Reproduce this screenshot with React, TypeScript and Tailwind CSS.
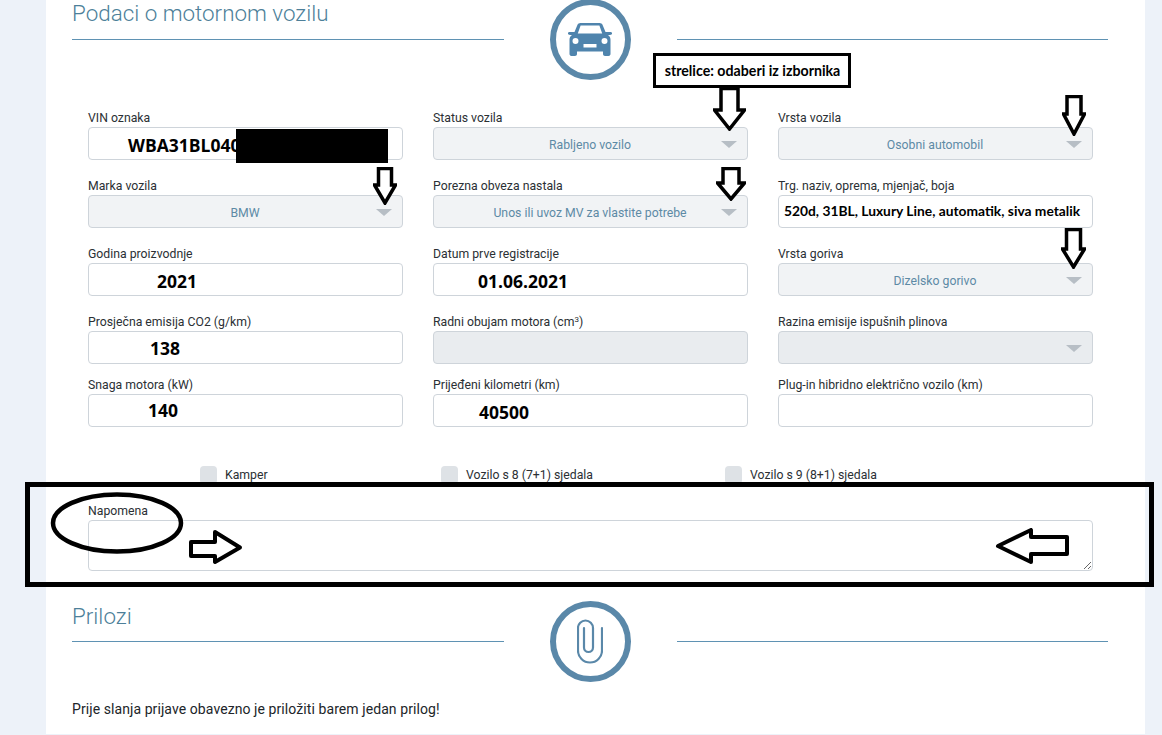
import React from "react";

const roboto = "font-['Roboto',sans-serif]";
const cols = "grid grid-cols-[315px_315px_315px] gap-x-[30px]";

function Label({ children }: { children: React.ReactNode }) {
  return <div className="h-[14px] mb-[3px] text-[12.25px] leading-[16px] text-[#2b3034] whitespace-nowrap">{children}</div>;
}

function Caret() {
  return <span className="absolute right-[10px] top-[13px] w-0 h-0 border-l-[8px] border-r-[8px] border-t-[7px] border-l-transparent border-r-transparent border-t-[#b7bec5]" />;
}

function SelectField({ label, value }: { label: React.ReactNode; value?: string }) {
  return (
    <div>
      <Label>{label}</Label>
      <div className={`relative h-[33px] rounded border border-[#ced4da] flex items-center justify-center pr-[1px] pt-[3px] text-[12.25px] text-[#5d8aa5] ${value ? "bg-[#f1f3f5]" : "bg-[#e9ecef]"}`}>
        {value}
        <Caret />
      </div>
    </div>
  );
}

function InputField({ label, value, indent = 0, drop = 0, disabled = false, small = false }: { label: React.ReactNode; value?: string; indent?: number; drop?: number; disabled?: boolean; small?: boolean }) {
  const type = small ? "font-['Lato',sans-serif] text-[13.8px]" : "font-['Open_Sans',sans-serif] text-[17.5px]";
  return (
    <div>
      <Label>{label}</Label>
      <div
        className={`h-[33px] rounded border border-[#ced4da] flex items-center font-bold text-black whitespace-nowrap ${type} ${disabled ? "bg-[#e9ecef]" : "bg-white"}`}
        style={{ paddingLeft: indent, paddingTop: drop }}
      >
        {value}
      </div>
    </div>
  );
}

function SectionHeader({ title, titleClass, children }: { title: string; titleClass: string; children: React.ReactNode }) {
  return (
    <div className="flex items-start">
      <div className={`w-[432px] h-[41px] border-b border-[#5f92b3] text-[22.4px] font-light leading-[26px] text-[#4d7f99] ${titleClass}`}>{title}</div>
      <div className="w-[173px] flex justify-center">
        <div className="w-[81px] h-[81px] rounded-full border-[6px] border-[#5a88a9] flex items-center justify-center -ml-[1px]">{children}</div>
      </div>
      <div className="w-[431px] h-[41px] border-b border-[#5f92b3]" />
    </div>
  );
}

function Check({ label, className }: { label: string; className: string }) {
  return (
    <div className={`flex items-center gap-[8px] ${className}`}>
      <span className="w-[17px] h-[18px] rounded-[4px] bg-[#dee2e6]" />
      <span className="text-[12.25px] text-[#2b3034] leading-[18px] pt-[1px]">{label}</span>
    </div>
  );
}

function DownArrow({ x, y, w, h, shaft, neck }: { x: number; y: number; w: number; h: number; shaft: number; neck: number }) {
  const l = (w - shaft) / 2;
  return (
    <svg className="absolute" style={{ left: x, top: y }} width={w} height={h} viewBox={`0 0 ${w} ${h}`}>
      <polygon
        points={`${l},1.5 ${l + shaft},1.5 ${l + shaft},${neck} ${w - 1.5},${neck} ${w / 2},${h - 2} 1.5,${neck} ${l},${neck}`}
        fill="#fff"
        stroke="#000"
        strokeWidth="3.500"
      />
    </svg>
  );
}

export default function App() {
  return (
    <div className={`relative h-[735px] w-full overflow-hidden bg-[#edf2f9] ${roboto}`}>
      <div className="ml-[46px] w-[1099px] h-full bg-white pl-[26px] pr-[37px]">
        <div className="-mt-[1px]">
          <SectionHeader title="Podaci o motornom vozilu" titleClass="pt-[1px]">
            <svg width="44" height="33" viewBox="0 0 44 33" fill="#4f84ad">
              <path d="M9.500 1.800C10 .7 11 0 12.500 0h19c1.500 0 2.500.7 3 1.800L37.500 9h4.800c.9 0 1.700.5 1.700 1.100v.7c0 .6-1 1.200-2 1.200h-2c1.700 1.200 2.500 2.800 2.500 4.700V31c0 1.100-.9 2-2 2h-3.500c-1.100 0-2-.9-2-2v-2.500H9V31c0 1.100-.9 2-2 2H3.500c-1.100 0-2-.9-2-2V16.700c0-1.900.8-3.500 2.500-4.700H2c-1 0-2-.6-2-1.200v-.7C0 9.500.8 9 1.700 9h4.800zM12.600 2.500 9.800 10.500h24.400l-2.800-8zM7.500 15a3 3 0 1 0 0 6 3 3 0 0 0 0-6zm29 0a3 3 0 1 0 0 6 3 3 0 0 0 0-6zM15.500 21v3.500h13V21z" fillRule="evenodd" />
            </svg>
          </SectionHeader>
        </div>

        <div className="pl-[16px] pr-[15px] mt-[30px]">
          <div className={cols}>
            <InputField label="VIN oznaka" value="WBA31BL040" indent={39} drop={4} />
            <SelectField label="Status vozila" value="Rabljeno vozilo" />
            <SelectField label="Vrsta vozila" value="Osobni automobil" />
          </div>
          <div className={`${cols} mt-[18px]`}>
            <SelectField label="Marka vozila" value="BMW" />
            <SelectField label="Porezna obveza nastala" value="Unos ili uvoz MV za vlastite potrebe" />
            <InputField label="Trg. naziv, oprema, mjenjač, boja" value="520d, 31BL, Luxury Line, automatik, siva metalik" indent={5} small />
          </div>
          <div className={`${cols} mt-[18px]`}>
            <InputField label="Godina proizvodnje" value="2021" indent={68} drop={4} />
            <InputField label="Datum prve registracije" value="01.06.2021" indent={44} drop={4} />
            <SelectField label="Vrsta goriva" value="Dizelsko gorivo" />
          </div>
          <div className={`${cols} mt-[18px]`}>
            <InputField label="Prosječna emisija CO2 (g/km)" value="138" indent={61} drop={2} />
            <InputField label={<>Radni obujam motora (cm<sup className="text-[8px]">3</sup>)</>} disabled />
            <SelectField label="Razina emisije ispušnih plinova" />
          </div>
          <div className={`${cols} mt-[13px]`}>
            <InputField label="Snaga motora (kW)" value="140" indent={59} />
            <InputField label="Prijeđeni kilometri (km)" value="40500" indent={45} drop={4} />
            <InputField label="Plug-in hibridno električno vozilo (km)" />
          </div>

          <div className="flex mt-[38px]">
            <Check label="Kamper" className="ml-[112px] w-[241px]" />
            <Check label="Vozilo s 8 (7+1) sjedala" className="w-[284px]" />
            <Check label="Vozilo s 9 (8+1) sjedala" />
          </div>

          <div className="mt-[19px]">
            <Label>Napomena</Label>
            <textarea className="block w-full h-[51px] rounded border border-[#ced4da] bg-white" />
          </div>
        </div>

        <div className="mt-[30px]">
          <SectionHeader title="Prilozi" titleClass="pt-[2px]">
            <svg width="26" height="45" viewBox="0 0 26 45" fill="none" stroke="#5a88a9" strokeWidth="2.200" strokeLinecap="round">
              <path d="M25 9v22.500a12 12 0 0 1-24 0V9a7.500 7.500 0 0 1 15 0v19.500a4.500 4.500 0 0 1-9 0V9" />
            </svg>
          </SectionHeader>
        </div>

        <p className="mt-[17px] text-[14px] leading-[20px] tracking-[0.08px] text-[#212529]">Prije slanja prijave obavezno je priložiti barem jedan prilog!</p>
      </div>

      {/* annotations drawn over the screenshot */}
      <div className="absolute left-[236px] top-[129px] w-[152px] h-[34px] bg-black" />
      <div className="absolute left-[653px] top-[53px] w-[198px] h-[35px] border-[3px] border-black bg-white flex items-center justify-center pl-[1px] font-['Lato',sans-serif] font-bold text-[14.2px] text-black whitespace-nowrap">
        strelice: odaberi iz izbornika
      </div>
      <DownArrow x={713} y={87} w={33} h={44} shaft={17} neck={23} />
      <DownArrow x={716} y={167} w={30} h={34} shaft={16} neck={16} />
      <DownArrow x={373} y={167} w={24} h={38} shaft={13} neck={18} />
      <DownArrow x={1062} y={95} w={24} h={41} shaft={14} neck={19} />
      <DownArrow x={1061} y={228} w={25} h={41} shaft={14} neck={21} />

      <div className="absolute left-[25px] top-[482px] w-[1129px] h-[105px] border-[5px] border-black" />
      <svg className="absolute left-[50px] top-[491px]" width="135" height="65" viewBox="0 0 135 65" fill="none">
        <ellipse cx="67" cy="32" rx="64" ry="28.500" stroke="#000" strokeWidth="4.500" />
      </svg>
      <svg className="absolute left-[189px] top-[530px]" width="54" height="35" viewBox="0 0 54 35">
        <polygon points="2,12 26,12 26,2 51,17.500 26,32 26,26 2,26" fill="#fff" stroke="#000" strokeWidth="4" strokeLinejoin="round" />
      </svg>
      <svg className="absolute left-[995px] top-[528px]" width="75" height="37" viewBox="0 0 75 37">
        <polygon points="3,18 36,2 36,9 72,9 72,26 36,26 36,34" fill="#fff" stroke="#000" strokeWidth="4" strokeLinejoin="round" />
      </svg>
    </div>
  );
}
